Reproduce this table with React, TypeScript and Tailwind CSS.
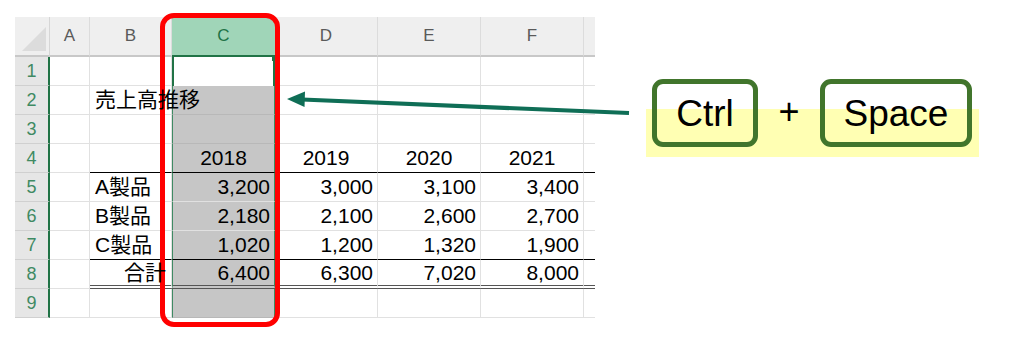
import React from "react";

const cellFont = { fontFamily: '"Liberation Sans", "Noto Sans CJK JP", sans-serif' };

type Row = {
  label?: string;
  labelRight?: boolean;
  values?: string[];
  center?: boolean;
  line?: "single" | "double";
};

const rows: Row[] = [
  {},
  { label: "売上高推移" },
  {},
  { values: ["2018", "2019", "2020", "2021"], center: true, line: "single" },
  { label: "A製品", values: ["3,200", "3,000", "3,100", "3,400"] },
  { label: "B製品", values: ["2,180", "2,100", "2,600", "2,700"] },
  { label: "C製品", values: ["1,020", "1,200", "1,320", "1,900"], line: "single" },
  { label: "合計", labelRight: true, values: ["6,400", "6,300", "7,020", "8,000"], line: "double" },
  {},
];

const lineClass = (line?: "single" | "double") =>
  line === "single"
    ? "border-b border-b-black"
    : line === "double"
      ? "border-b-[4px] border-double border-b-[#555]"
      : "border-b border-b-[#e1e1e1]";

const Sheet = () => (
  <div className="relative mt-[17px] ml-[15px]">
    <div
      className="grid grid-cols-[35px_40px_82px_103px_103px_103px_103px_11px] grid-rows-[40px_repeat(9,29px)] text-[21px] text-black"
      style={cellFont}
    >
      {/* column headings */}
      <div className="relative bg-[#efefef] border-b-2 border-b-[#c8c8c8] border-r border-r-[#d6d6d6]">
        <svg className="absolute left-[6px] top-[9px]" width="26" height="26" viewBox="0 0 26 26">
          <polygon points="1,25 25,25 25,1" fill="#dcdcdc" />
        </svg>
      </div>
      {["A", "B", "C", "D", "E", "F"].map((c) =>
        c === "C" ? (
          <div
            key={c}
            className="flex items-center justify-center bg-[#a0d5b8] text-[17px] text-[#217346] border-b-2 border-b-[#217346]"
          >
            {c}
          </div>
        ) : (
          <div
            key={c}
            className="flex items-center justify-center bg-[#efefef] text-[17px] text-[#5a5a5a] border-b-2 border-b-[#c8c8c8] border-r border-r-[#dcdcdc]"
          >
            {c}
          </div>
        )
      )}
      <div className="bg-[#efefef] border-b-2 border-b-[#c8c8c8]" />

      {rows.map((r, i) => {
        const n = i + 1;
        const line = lineClass(r.line);
        return (
          <React.Fragment key={n}>
            <div className="flex items-center justify-center bg-[#e6e6e6] text-[18px] text-[#3f8a63] border-r-2 border-r-[#217346] border-b border-b-[#d0d0d0]">
              {n}
            </div>
            <div className="border-r border-r-[#e1e1e1] border-b border-b-[#e1e1e1]" />
            <div
              className={`flex items-center whitespace-nowrap px-[5px] border-r border-r-[#e1e1e1] ${
                r.labelRight ? "justify-end" : "justify-start"
              } ${r.values ? line : "border-b border-b-[#e1e1e1]"}`}
            >
              {r.label && <span className="relative z-10">{r.label}</span>}
            </div>
            {n === 1 ? (
              <div className="relative bg-white border-x-2 border-x-[#217346]">
                <div className="absolute -right-[4px] -top-[1px] h-[5px] w-[5px] bg-[#217346]" />
              </div>
            ) : (
              <div
                className={`flex items-center px-[4px] bg-[#c6c6c6] border-x border-x-[#3f8a63] ${
                  r.center ? "justify-center" : "justify-end"
                } ${r.values ? line : "border-b border-b-[#b8b8b8]"}`}
              >
                {r.values?.[0]}
              </div>
            )}
            {[1, 2, 3].map((k) => (
              <div
                key={k}
                className={`flex items-center px-[4px] border-r border-r-[#e1e1e1] ${
                  r.center ? "justify-center" : "justify-end"
                } ${r.values ? line : "border-b border-b-[#e1e1e1]"}`}
              >
                {r.values?.[k]}
              </div>
            ))}
            <div className={r.values ? line : "border-b border-b-[#e1e1e1]"} />
          </React.Fragment>
        );
      })}
    </div>

    {/* red outline around column C */}
    <div className="pointer-events-none absolute left-[145px] top-[-4px] h-[314px] w-[120px] rounded-[14px] border-[5px] border-[#ff0000]" />
  </div>
);

const Key = ({ label, width }: { label: string; width: string }) => (
  <div
    className={`flex h-[68px] items-center justify-center rounded-[11px] border-[5px] border-[#41752c] ${width}`}
  >
    <span className="text-[37px] leading-none text-black">{label}</span>
  </div>
);

export default function App() {
  return (
    <div className="relative flex h-[345px] w-[1010px] items-start overflow-hidden bg-white">
      <Sheet />

      {/* shortcut keys on a highlighter band */}
      <div
        className="ml-[51px] mt-[79px] flex h-[78px] w-[333px] items-start pl-[6px] bg-[linear-gradient(to_bottom,transparent_30px,#ffffb3_30px)]"
        style={{ fontFamily: '"Liberation Sans", Arial, sans-serif' }}
      >
        <Key label="Ctrl" width="w-[106px]" />
        <div className="flex h-[68px] w-[62px] items-center justify-center pb-[2px] text-[36px] leading-none text-black">
          +
        </div>
        <Key label="Space" width="w-[152px]" />
      </div>

      {/* arrow pointing from the keys to the column */}
      <svg className="pointer-events-none absolute left-0 top-0" width="1010" height="345">
        <line x1="629" y1="113" x2="302" y2="99.6" stroke="#0f6e56" strokeWidth="4" />
        <polygon points="287,99 305,91.5 304.5,107" fill="#0f6e56" />
      </svg>
    </div>
  );
}
